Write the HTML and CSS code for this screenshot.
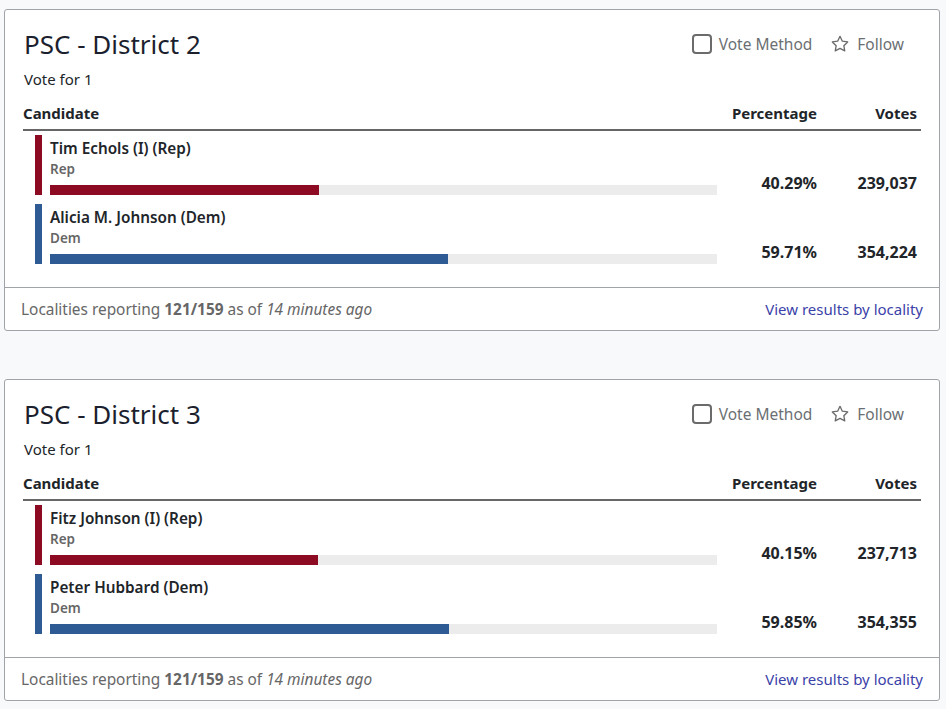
FILE: index.html
```html
<!DOCTYPE html>
<html lang="en">
<head>
<meta charset="utf-8">
<title>PSC Results</title>
<link rel="stylesheet" href="styles.css">
</head>
<body>
<main class="page">
  <section class="card">
    <div class="card-body">
      <div class="head">
        <h2 class="title">PSC - District 2</h2>
        <div class="actions">
          <label class="check"><span class="box"></span><span>Vote Method</span></label>
          <span class="follow"><svg class="star" viewBox="0 0 24 24" width="20" height="20"><path d="M12 2.8l2.8 5.8 6.4.9-4.6 4.5 1.1 6.3L12 17.3l-5.7 3 1.1-6.3-4.6-4.5 6.4-.9z" fill="none" stroke="#6b6b6b" stroke-width="1.6" stroke-linejoin="round"/></svg><span>Follow</span></span>
        </div>
      </div>
      <div class="sub">Vote for 1</div>
      <div class="thead">
        <span>Candidate</span>
        <span class="num">Percentage</span>
        <span class="num">Votes</span>
      </div>
      <div class="row rep">
        <div class="cand">
          <div class="name">Tim Echols (I) (Rep)</div>
          <div class="party">Rep</div>
          <div class="track"><div class="fill" style="width:40.29%"></div></div>
        </div>
        <div class="num val">40.29%</div>
        <div class="num val">239,037</div>
      </div>
      <div class="row dem">
        <div class="cand">
          <div class="name">Alicia M. Johnson (Dem)</div>
          <div class="party">Dem</div>
          <div class="track"><div class="fill" style="width:59.71%"></div></div>
        </div>
        <div class="num val">59.71%</div>
        <div class="num val">354,224</div>
      </div>
    </div>
    <div class="foot">
      <span>Localities reporting <b>121/159</b> as of <i>14 minutes ago</i></span>
      <a href="#" class="link">View results by locality</a>
    </div>
  </section>

  <section class="card">
    <div class="card-body">
      <div class="head">
        <h2 class="title">PSC - District 3</h2>
        <div class="actions">
          <label class="check"><span class="box"></span><span>Vote Method</span></label>
          <span class="follow"><svg class="star" viewBox="0 0 24 24" width="20" height="20"><path d="M12 2.8l2.8 5.8 6.4.9-4.6 4.5 1.1 6.3L12 17.3l-5.7 3 1.1-6.3-4.6-4.5 6.4-.9z" fill="none" stroke="#6b6b6b" stroke-width="1.6" stroke-linejoin="round"/></svg><span>Follow</span></span>
        </div>
      </div>
      <div class="sub">Vote for 1</div>
      <div class="thead">
        <span>Candidate</span>
        <span class="num">Percentage</span>
        <span class="num">Votes</span>
      </div>
      <div class="row rep">
        <div class="cand">
          <div class="name">Fitz Johnson (I) (Rep)</div>
          <div class="party">Rep</div>
          <div class="track"><div class="fill" style="width:40.15%"></div></div>
        </div>
        <div class="num val">40.15%</div>
        <div class="num val">237,713</div>
      </div>
      <div class="row dem">
        <div class="cand">
          <div class="name">Peter Hubbard (Dem)</div>
          <div class="party">Dem</div>
          <div class="track"><div class="fill" style="width:59.85%"></div></div>
        </div>
        <div class="num val">59.85%</div>
        <div class="num val">354,355</div>
      </div>
    </div>
    <div class="foot">
      <span>Localities reporting <b>121/159</b> as of <i>14 minutes ago</i></span>
      <a href="#" class="link">View results by locality</a>
    </div>
  </section>
</main>
</body>
</html>
```

FILE: styles.css
```css
* { box-sizing: border-box; }
html, body { margin: 0; padding: 0; }
body {
  background: #f8f9fa;
  font-family: "Noto Sans", "Open Sans", sans-serif;
  color: #212529;
}
.page {
  display: flex;
  flex-direction: column;
  gap: 48px;
  padding: 9px 6px 0 4px;
}
.card {
  background: #fff;
  border: 1px solid #a0a4a8;
  border-radius: 3px;
}
.card-body {
  padding: 16px 18px 23px 18px;
}
.head {
  display: flex;
  align-items: center;
  justify-content: space-between;
  padding-left: 1px;
}
.title {
  margin: 0;
  font-size: 26px;
  font-weight: 400;
  line-height: 36px;
  color: #1c1f2e;
}
.actions {
  display: flex;
  align-items: center;
  gap: 18px;
  margin-right: 17px;
  color: #6b6f73;
  font-size: 15.5px;
}
.check, .follow {
  display: flex;
  align-items: center;
  gap: 7px;
}
.box {
  width: 20px;
  height: 20px;
  border: 2px solid #6b6b6b;
  border-radius: 4px;
}
.star { display: block; }
.sub {
  margin-top: 7px;
  padding-left: 1px;
  font-size: 15px;
  line-height: 20px;
}
.thead {
  display: grid;
  grid-template-columns: 1fr 99px 100px;
  padding: 0 4px 6px 0;
  margin-top: 14px;
  border-bottom: 2px solid #666;
  font-size: 15px;
  font-weight: 700;
  line-height: 20px;
}
.num { text-align: right; }
.row {
  display: grid;
  grid-template-columns: 1fr 99px 100px;
  margin: 4px 4px 0 12px;
  border-left: 7px solid;
  padding-left: 8px;
  height: 60px;
}
.row + .row { margin-top: 9px; }
.rep { border-left-color: #8c0a22; }
.dem { border-left-color: #2f5b94; }
.cand {
  padding-top: 3px;
  margin-right: 1px;
}
.name {
  font-size: 15.3px;
  font-weight: 600;
  line-height: 20px;
}
.party {
  margin-top: 2px;
  font-size: 13.5px;
  font-weight: 600;
  line-height: 18px;
  color: #666;
}
.track {
  margin-top: 7px;
  height: 10px;
  background: #ececec;
}
.fill { height: 100%; }
.rep .fill { background: #8c0a22; }
.dem .fill { background: #2f5b94; }
.val {
  align-self: end;
  padding-bottom: 2px;
  font-size: 16px;
  font-weight: 700;
  line-height: 20px;
}
.foot {
  display: flex;
  justify-content: space-between;
  align-items: center;
  border-top: 1px solid #a0a4a8;
  height: 43px;
  padding: 0 16px;
  font-size: 15.4px;
  color: #666;
}
.foot b { font-weight: 700; }
.link {
  color: #3a42a8;
  text-decoration: none;
  font-size: 15px;
}
```
